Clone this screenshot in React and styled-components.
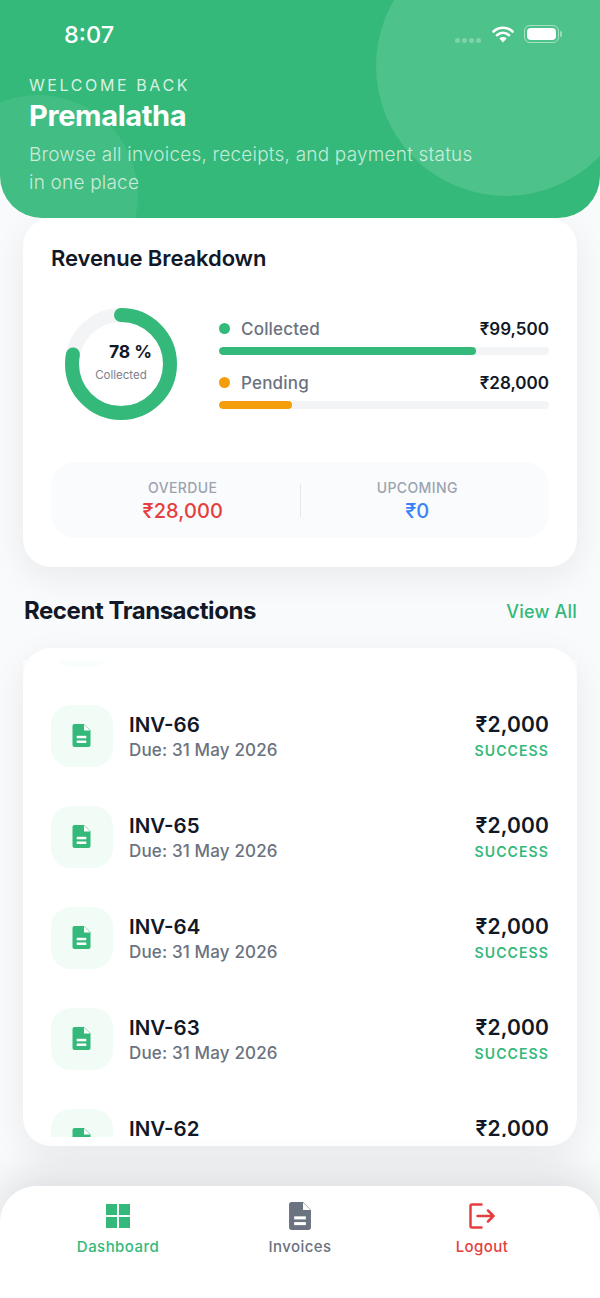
import React from "react";
import styled, { createGlobalStyle } from "styled-components";

const Global = createGlobalStyle`
  html, body { margin: 0; padding: 0; background: #f9fafb; }
  * { box-sizing: border-box; }
`;
const GREEN = "#34b97a";
const Page = styled.div`
  width: 600px; height: 1298px; overflow: hidden; display: flex; flex-direction: column;
  background: #f9fafb; color: #111827;
  font-family: Inter, "Noto Sans", sans-serif;
`;
const Header = styled.header`
  position: relative; height: 218px; flex: none; overflow: hidden;
  background: ${GREEN}; border-radius: 0 0 42px 42px; padding: 0 29px; color: #fff;
`;
const Bubble = styled.div`
  position: absolute; border-radius: 50%;
  width: ${p => p.$size}px; height: ${p => p.$size}px;
  left: ${p => p.$left}px; top: ${p => p.$top}px;
  background: rgba(255,255,255,${p => p.$alpha});
`;
const StatusBar = styled.div`
  position: relative; height: 75px; display: flex; justify-content: space-between; align-items: flex-start;
`;
const Time = styled.div`
  margin: 20px 0 0 35px; font-size: 23.5px; line-height: 30px; font-weight: 500;
`;
const StatusIcons = styled.div`
  display: flex; align-items: center; margin: 25px 12px 0 0; height: 18px;
`;
const SignalDots = styled.div`
  display: flex; gap: 2px; margin: 12px 11px 0 0;
`;
const SignalDot = styled.span`
  width: 5px; height: 5px; border-radius: 50%; background: rgba(255,255,255,.28);
`;
const Battery = styled.div`
  position: relative; width: 35px; height: 18px; margin-left: 10px; padding: 2px;
  border: 1px solid rgba(255,255,255,.5); border-radius: 6px;
  &::after {
    content: ""; position: absolute; right: -4px; top: 5px; width: 2px; height: 6px;
    background: rgba(255,255,255,.45); border-radius: 0 2px 2px 0;
  }
`;
const BatteryFill = styled.div`
  width: 100%; height: 100%; background: #fff; border-radius: 4px;
`;
const Welcome = styled.div`
  position: relative; font-size: 16px; line-height: 20px; font-weight: 400; letter-spacing: 2.6px;
  color: rgba(255,255,255,.82);
`;
const Name = styled.h1`
  position: relative; margin: 3px 0 0; font-size: 29px; line-height: 36px; font-weight: 700; letter-spacing: -0.35px;
`;
const Sub = styled.p`
  position: relative; margin: 7px 0 0; width: 450px; font-size: 19px; line-height: 28px; font-weight: 300;
  letter-spacing: .2px; color: rgba(255,255,255,.72);
`;
const Main = styled.main`
  flex: 1; padding: 0 23px; min-height: 0;
`;
const Card = styled.section`
  background: #fff; border-radius: 28px; box-shadow: 0 10px 34px rgba(17,24,39,.07);
`;
const RevenueCard = styled(Card)`
  height: 349px; padding: 27px 28px 29px;
`;
const CardTitle = styled.h2`
  margin: 0; font-size: 22px; line-height: 26px; font-weight: 600; letter-spacing: -0.1px;
`;
const Breakdown = styled.div`
  display: flex; align-items: center; gap: 42px; margin: 37px 0 42px 14px; height: 112px;
`;
const Donut = styled.div`
  position: relative; width: 112px; height: 112px; flex: none;
`;
const DonutText = styled.div`
  position: absolute; inset: 0; display: flex; flex-direction: column; align-items: center; justify-content: center;
`;
const Percent = styled.div`
  font-size: 17.5px; line-height: 22px; font-weight: 700; margin: -5px 0 0 19px; white-space: pre;
`;
const DonutLabel = styled.div`
  font-size: 11.5px; line-height: 14px; margin-top: 5px; color: #7b818c;
`;
const Legend = styled.div`
  flex: 1; display: flex; flex-direction: column; gap: 17px; padding-bottom: 2px;
`;
const LegendRow = styled.div`
  display: flex; align-items: center; height: 22px;
`;
const Dot = styled.span`
  width: 11px; height: 11px; border-radius: 50%; margin-right: 11px; background: ${p => p.$color};
`;
const LegendLabel = styled.span`
  flex: 1; font-size: 17px; font-weight: 500; letter-spacing: .2px; color: #6b7280;
`;
const LegendValue = styled.span`
  font-size: 17px; font-weight: 600; color: #111827;
`;
const Track = styled.div`
  height: 8px; margin-top: 7px; border-radius: 4px; background: #f3f4f6; overflow: hidden;
`;
const Fill = styled.div`
  height: 100%; border-radius: 4px; background: ${p => p.$color};
`;
const Stats = styled.div`
  height: 76px; padding: 2px 15px 0; border-radius: 24px; background: #f9fbfd;
  display: grid; grid-template-columns: 1fr 1px 1fr; align-items: center;
`;
const Stat = styled.div`
  text-align: center;
`;
const StatLabel = styled.div`
  font-size: 14px; line-height: 20px; font-weight: 500; letter-spacing: .4px; color: #9ca3af;
`;
const StatValue = styled.div`
  font-size: 20px; line-height: 26px; font-weight: 500; letter-spacing: .1px; color: ${p => p.$color};
`;
const Divider = styled.div`
  width: 1px; height: 33px; margin-top: -2px; background: #e5e7eb;
`;
const SectionHead = styled.div`
  display: flex; justify-content: space-between; align-items: center; height: 30px; margin: 29px 0 22px;
`;
const SectionTitle = styled.h2`
  margin: 0 0 0 1px; font-size: 24px; line-height: 30px; font-weight: 700; letter-spacing: -0.45px; color: #111827;
`;
const ViewAll = styled.a`
  font-size: 18px; font-weight: 500; letter-spacing: .2px; color: ${GREEN};
`;
const ListCard = styled(Card)`
  height: 498px; padding: 12px 0 9px;
`;
const Scroller = styled.div`
  position: relative; height: 477px; overflow: hidden;
  &::before {
    content: ""; position: absolute; left: 0; right: 0; top: 0; height: 14px; z-index: 1; pointer-events: none;
    background: linear-gradient(rgba(255,255,255,.75), rgba(255,255,255,0));
  }
`;
const Rows = styled.div`
  display: flex; flex-direction: column; gap: 39px; margin-top: -56px; padding: 0 28px;
`;
const Row = styled.div`
  display: flex; align-items: center; height: 62px; flex: none;
`;
const IconBox = styled.div`
  width: 62px; height: 62px; flex: none; margin-right: 16px; border-radius: 20px; background: #f0fcf5;
  display: flex; align-items: center; justify-content: center; padding: 0 1px 2px 0;
`;
const RowText = styled.div`
  flex: 1; margin-top: 3px;
`;
const RowTitle = styled.div`
  font-size: 20.5px; line-height: 25px; font-weight: 600; color: #111827;
`;
const RowSub = styled.div`
  font-size: 17px; line-height: 26px; font-weight: 500; letter-spacing: .15px; color: #6b7280;
`;
const RowRight = styled.div`
  text-align: right; margin-top: 4px;
`;
const Amount = styled.div`
  font-size: 21px; line-height: 26px; font-weight: 600; letter-spacing: .15px; color: #111827;
`;
const Status = styled.div`
  font-size: 14px; line-height: 26px; font-weight: 600; letter-spacing: 1.1px; color: ${GREEN};
`;
const Nav = styled.nav`
  height: 112px; flex: none; padding: 14px 27px 0; background: #fff; border-radius: 36px 36px 0 0;
  box-shadow: 0 -10px 40px rgba(17,24,39,.13);
  display: grid; grid-template-columns: repeat(3, 1fr);
`;
const NavItem = styled.div`
  display: flex; flex-direction: column; align-items: center; color: ${p => p.$color};
`;
const NavIcon = styled.div`
  height: 32px; display: flex; align-items: center; justify-content: center;
`;
const NavLabel = styled.div`
  margin-top: 4px; font-size: 15px; line-height: 22px; font-weight: 500; letter-spacing: .45px;
`;

const DocIcon = ({ w, h, color }) => (
  <svg width={w} height={h} viewBox="0 0 18 23">
    <path d="M2 0H11.5L18 6.5V21C18 22.1 17.1 23 16 23H2C.9 23 0 22.1 0 21V2C0 .9.9 0 2 0Z" fill={color} />
    <path d="M11.5 .4L17.6 6.5H11.5Z" fill="#fff" />
    <rect x="4.2" y="11.8" width="9.6" height="2.5" fill="#fff" />
    <rect x="4.2" y="16.5" width="9.6" height="2.5" fill="#fff" />
  </svg>
);

const items = [67, 66, 65, 64, 63, 62];

export default function App() {
  return (
    <Page>
      <Global />
      <Header>
        <Bubble $size={260} $left={376} $top={-64} $alpha={0.13} />
        <Bubble $size={200} $left={-62} $top={95} $alpha={0.07} />
        <StatusBar>
          <Time>8:07</Time>
          <StatusIcons>
            <SignalDots>
              <SignalDot /><SignalDot /><SignalDot /><SignalDot />
            </SignalDots>
            <svg width="22" height="18" viewBox="0 0 22 18">
              <path d="M1.5 6.5C6.8 1.4 15.2 1.4 20.5 6.5M5 10.2C8.4 7 13.6 7 17 10.2" fill="none" stroke="#fff" strokeWidth="2.6" strokeLinecap="round" />
              <path d="M7.3 13.2C9.4 11.6 12.6 11.6 14.7 13.2L11 17.6Z" fill="#fff" />
            </svg>
            <Battery><BatteryFill /></Battery>
          </StatusIcons>
        </StatusBar>
        <Welcome>WELCOME BACK</Welcome>
        <Name>Premalatha</Name>
        <Sub>Browse all invoices, receipts, and payment status in one place</Sub>
      </Header>
      <Main>
        <RevenueCard>
          <CardTitle>Revenue Breakdown</CardTitle>
          <Breakdown>
            <Donut>
              <svg width="112" height="112" viewBox="0 0 112 112">
                <circle cx="56" cy="56" r="49" fill="none" stroke="#f3f4f6" strokeWidth="14" />
                <circle cx="56" cy="56" r="49" fill="none" stroke={GREEN} strokeWidth="14" strokeLinecap="round"
                  strokeDasharray={`${2 * Math.PI * 49 * 0.78} ${2 * Math.PI * 49}`} transform="rotate(-90 56 56)" />
              </svg>
              <DonutText>
                <Percent>78 %</Percent>
                <DonutLabel>Collected</DonutLabel>
              </DonutText>
            </Donut>
            <Legend>
              <div>
                <LegendRow>
                  <Dot $color={GREEN} />
                  <LegendLabel>Collected</LegendLabel>
                  <LegendValue>₹99,500</LegendValue>
                </LegendRow>
                <Track><Fill $color={GREEN} style={{ width: "78%" }} /></Track>
              </div>
              <div>
                <LegendRow>
                  <Dot $color="#f59e0b" />
                  <LegendLabel>Pending</LegendLabel>
                  <LegendValue>₹28,000</LegendValue>
                </LegendRow>
                <Track><Fill $color="#f59e0b" style={{ width: "22%" }} /></Track>
              </div>
            </Legend>
          </Breakdown>
          <Stats>
            <Stat>
              <StatLabel>OVERDUE</StatLabel>
              <StatValue $color="#e53e3e">₹28,000</StatValue>
            </Stat>
            <Divider />
            <Stat>
              <StatLabel>UPCOMING</StatLabel>
              <StatValue $color="#3b82f6">₹0</StatValue>
            </Stat>
          </Stats>
        </RevenueCard>
        <SectionHead>
          <SectionTitle>Recent Transactions</SectionTitle>
          <ViewAll>View All</ViewAll>
        </SectionHead>
        <ListCard>
          <Scroller>
            <Rows>
              {items.map(n => (
                <Row key={n}>
                  <IconBox><DocIcon w={19} h={23} color={GREEN} /></IconBox>
                  <RowText>
                    <RowTitle>INV-{n}</RowTitle>
                    <RowSub>Due: 31 May 2026</RowSub>
                  </RowText>
                  <RowRight>
                    <Amount>₹2,000</Amount>
                    <Status>SUCCESS</Status>
                  </RowRight>
                </Row>
              ))}
            </Rows>
          </Scroller>
        </ListCard>
      </Main>
      <Nav>
        <NavItem $color={GREEN}>
          <NavIcon>
            <svg width="24" height="24" viewBox="0 0 24 24" fill={GREEN}>
              <rect width="11" height="11" /><rect x="13" width="11" height="11" />
              <rect y="13" width="11" height="11" /><rect x="13" y="13" width="11" height="11" />
            </svg>
          </NavIcon>
          <NavLabel>Dashboard</NavLabel>
        </NavItem>
        <NavItem $color="#6b7280">
          <NavIcon><DocIcon w={22} h={28} color="#6b7280" /></NavIcon>
          <NavLabel>Invoices</NavLabel>
        </NavItem>
        <NavItem $color="#e53e3e">
          <NavIcon>
            <svg width="26" height="26" viewBox="0 0 26 26" fill="none" stroke="#e53e3e" strokeWidth="2.5" strokeLinecap="round" strokeLinejoin="round">
              <path d="M12.5 1.5H3C2 1.5 1.5 2 1.5 3V23C1.5 24 2 24.5 3 24.5H12.5" />
              <path d="M8.5 13H24.5M19 7.5L24.5 13L19 18.5" />
            </svg>
          </NavIcon>
          <NavLabel>Logout</NavLabel>
        </NavItem>
      </Nav>
    </Page>
  );
}
